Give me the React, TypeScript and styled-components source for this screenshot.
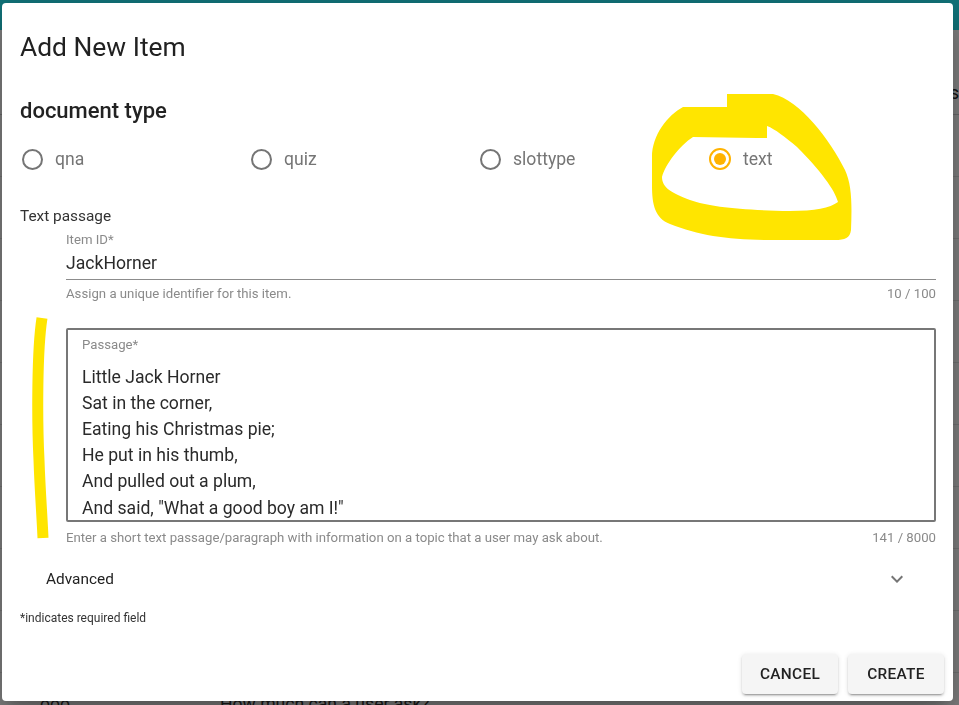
import React from "react";
import styled, { createGlobalStyle } from "styled-components";

const Global = createGlobalStyle`
  html, body { margin: 0; padding: 0; background: #fff; }
  body { font-family: Roboto, "Liberation Sans", Arial, sans-serif; overflow: hidden; }
  * { box-sizing: border-box; }
`;

/* ---------- background application ---------- */
const Page = styled.div`
  width: 959px;
  height: 705px;
  overflow: hidden;
  background: #fff;
`;
const TopBar = styled.header`
  height: 30px;
  background: #22e4f0;
`;
const HeaderRow = styled.div`
  height: 85px;
  display: flex;
  align-items: flex-end;
  justify-content: flex-end;
  padding-bottom: 10px;
  border-bottom: 1px solid #d0d0d0;
  font-size: 17.6px;
  line-height: 22px;
  color: #222;
`;
const Row = styled.div`
  height: 62px;
  display: flex;
  align-items: center;
  border-bottom: 1px solid #e3e3e3;
  font-size: 17.6px;
  line-height: 22px;
  color: #333;
`;
const Cell = styled.span<{ $w: number; $pad: number }>`
  width: ${(p) => p.$w}px;
  flex-shrink: 0;
  padding-left: ${(p) => p.$pad}px;
`;
const Backdrop = styled.div`
  position: fixed;
  inset: 0;
  background: rgba(0, 0, 0, 0.5);
`;

/* ---------- dialog ---------- */
const Dialog = styled.div`
  position: fixed;
  top: 3px;
  left: 2px;
  width: 951px;
  background: #fff;
  border-radius: 4px;
  box-shadow: 0 11px 15px -7px rgba(0, 0, 0, 0.2), 0 24px 38px 3px rgba(0, 0, 0, 0.14),
    0 9px 46px 8px rgba(0, 0, 0, 0.12);
  display: flex;
  flex-direction: column;
  padding-top: 28px;
  color: rgba(0, 0, 0, 0.87);
`;
const Title = styled.h2`
  margin: 0;
  padding: 0 17px 0 18px;
  font-size: 26.4px;
  line-height: 32px;
  font-weight: 400;
  color: #212121;
`;
const Content = styled.div`
  padding: 0 17px 0 18px;
  display: flex;
  flex-direction: column;
`;
const SectionHeading = styled.h3`
  margin: 34px 0 0;
  font-size: 22px;
  line-height: 28px;
  font-weight: 500;
  color: #222;
`;
const RadioGroup = styled.div`
  margin-top: 13px;
  height: 42px;
  display: grid;
  grid-template-columns: repeat(4, 229px);
  padding-left: 2px;
`;
const RadioLabel = styled.label`
  display: flex;
  align-items: center;
  gap: 12px;
  font-size: 17.6px;
  line-height: 26px;
  color: #757575;
`;
const RadioCircle = styled.span<{ $checked?: boolean }>`
  width: ${(p) => (p.$checked ? 22 : 21)}px;
  height: ${(p) => (p.$checked ? 22 : 21)}px;
  border-radius: 50%;
  border: 2px solid ${(p) => (p.$checked ? "#ffb300" : "#757575")};
  display: inline-flex;
  align-items: center;
  justify-content: center;
  flex-shrink: 0;
  &::after {
    content: "";
    width: 12px;
    height: 12px;
    border-radius: 50%;
    background: #ffb300;
    display: ${(p) => (p.$checked ? "block" : "none")};
  }
`;
const SubHeading = styled.div`
  margin-top: 26px;
  font-size: 15.4px;
  line-height: 20px;
  color: #333;
`;
const Field = styled.div<{ $mt: number }>`
  margin: ${(p) => p.$mt}px 0 0 46px;
  display: flex;
  flex-direction: column;
`;
const SmallLabel = styled.div`
  font-size: 13.2px;
  line-height: 16px;
  color: #8a8a8a;
`;
const InputValue = styled.div`
  margin-top: 4px;
  font-size: 17.6px;
  line-height: 22px;
  padding-bottom: 5px;
  border-bottom: 1px solid #8c8c8c;
  color: #2a2a2a;
`;
const HelperRow = styled.div<{ $mt: number }>`
  margin-top: ${(p) => p.$mt}px;
  display: flex;
  justify-content: space-between;
  font-size: 13.2px;
  line-height: 16px;
  color: #8a8a8a;
`;
const OutlinedBox = styled.div`
  height: 194px;
  border: 2px solid #777;
  border-radius: 2px;
  padding: 7px 14px 0;
  overflow: hidden;
`;
const PassageText = styled.div`
  margin-top: 10.5px;
  font-size: 17.6px;
  line-height: 26.2px;
  color: #2a2a2a;
  white-space: pre-line;
`;
const Advanced = styled.div`
  margin-top: 6px;
  height: 53px;
  display: flex;
  align-items: center;
  justify-content: space-between;
  padding: 0 27px 0 26px;
  font-size: 15.4px;
  color: #222;
`;
const Chevron = styled.svg`
  width: 24px;
  height: 24px;
  fill: #757575;
`;
const RequiredNote = styled.div`
  margin-top: 5px;
  font-size: 12px;
  line-height: 16px;
  color: #333;
`;
const Actions = styled.div`
  margin-top: 28px;
  display: flex;
  justify-content: flex-end;
  gap: 10px;
  padding: 0 9px 7px;
`;
const Button = styled.button`
  height: 40px;
  min-width: 96px;
  padding: 0 17px;
  border: none;
  border-radius: 4px;
  background: #f5f5f5;
  box-shadow: 0 3px 1px -2px rgba(0, 0, 0, 0.2), 0 2px 2px 0 rgba(0, 0, 0, 0.14),
    0 1px 5px 0 rgba(0, 0, 0, 0.12);
  font-family: Roboto, "Liberation Sans", Arial, sans-serif;
  font-size: 15.4px;
  font-weight: 500;
  letter-spacing: 0.3px;
  text-transform: uppercase;
  color: #222;
`;

/* ---------- hand-drawn annotation ---------- */
const Annotation = styled.svg`
  position: fixed;
  inset: 0;
  width: 959px;
  height: 705px;
  pointer-events: none;
`;

const docTypes = ["qna", "quiz", "slottype", "text"];
const passage = `Little Jack Horner
Sat in the corner,
Eating his Christmas pie;
He put in his thumb,
And pulled out a plum,
And said, "What a good boy am I!"`;

export default function App() {
  const rows = Array.from({ length: 10 });
  return (
    <>
      <Global />
      <Page>
        <TopBar />
        <HeaderRow>Items</HeaderRow>
        {rows.map((_, i) => (
          <Row key={i}>
            {i === 9 && (
              <>
                <Cell $w={220} $pad={40}>ooo</Cell>
                <Cell $w={500} $pad={0}>How much can a user ask?</Cell>
              </>
            )}
          </Row>
        ))}
      </Page>
      <Backdrop />
      <Dialog>
        <Title>Add New Item</Title>
        <Content>
          <SectionHeading>document type</SectionHeading>
          <RadioGroup>
            {docTypes.map((t) => (
              <RadioLabel key={t}>
                <RadioCircle $checked={t === "text"} />
                {t}
              </RadioLabel>
            ))}
          </RadioGroup>
          <SubHeading>Text passage</SubHeading>
          <Field $mt={6}>
            <SmallLabel>Item ID*</SmallLabel>
            <InputValue>JackHorner</InputValue>
            <HelperRow $mt={6}>
              <span>Assign a unique identifier for this item.</span>
              <span>10 / 100</span>
            </HelperRow>
          </Field>
          <Field $mt={26}>
            <OutlinedBox>
              <SmallLabel>Passage*</SmallLabel>
              <PassageText>{passage}</PassageText>
            </OutlinedBox>
            <HelperRow $mt={8}>
              <span>Enter a short text passage/paragraph with information on a topic that a user may ask about.</span>
              <span>141 / 8000</span>
            </HelperRow>
          </Field>
          <Advanced>
            <span>Advanced</span>
            <Chevron viewBox="0 0 24 24">
              <path d="M16.59 8.59L12 13.17 7.41 8.59 6 10l6 6 6-6z" />
            </Chevron>
          </Advanced>
          <RequiredNote>*indicates required field</RequiredNote>
        </Content>
        <Actions>
          <Button>Cancel</Button>
          <Button>Create</Button>
        </Actions>
      </Dialog>
      <Annotation viewBox="0 0 959 705">
        <path
          fill="#ffe500"
          fillRule="evenodd"
          d="M727 94 L773 94 C800 100 830 140 845 170 C852 185 852 205 851 230 C850 238 845 240 835 240 L773 240 C730 240 700 236 670 224 C655 218 652 205 652 185 L652 157 C652 135 668 115 683 107 L727 107 Z
             M767 126 L767 138 L757 138 L693 137 C680 145 665 165 662 177 C662 188 672 193 690 200 C710 207 740 210 790 211 C815 211 830 208 838 202 C835 190 820 170 797 147 C785 137 775 129 767 126 Z"
        />
        <path
          fill="none"
          stroke="#ffe500"
          strokeWidth={11}
          d="M42 318 C37 350 37 420 39 460 C40 490 42 515 43 538"
        />
      </Annotation>
    </>
  );
}
